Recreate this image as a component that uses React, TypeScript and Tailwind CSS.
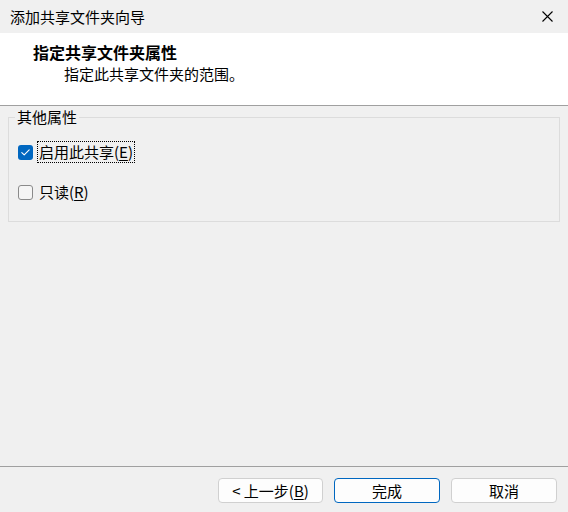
import React from "react";

const font = { fontFamily: '"Noto Sans CJK SC", "Noto Sans", sans-serif' };

function CheckBox({ checked }: { checked: boolean }) {
  if (checked) {
    return (
      <span className="flex h-[15px] w-[15px] shrink-0 items-center justify-center rounded-[3px] bg-[#0067c0]">
        <svg width="9" height="7" viewBox="0 0 9 7" fill="none">
          <path d="M0.8 3.6 L3.2 5.9 L8.2 0.9" stroke="#ffffff" strokeWidth="1.1" strokeLinecap="round" strokeLinejoin="round" />
        </svg>
      </span>
    );
  }
  return <span className="h-[15px] w-[15px] shrink-0 rounded-[3px] border border-[#8a8a8a] bg-[#f5f5f5]" />;
}

export default function App() {
  return (
    <div
      className="flex h-[512px] w-[568px] flex-col overflow-hidden bg-[#f0f0f0] text-[15px] text-black"
      style={font}
    >
      {/* Title bar */}
      <div className="flex h-[33px] shrink-0 items-center justify-between bg-[#f0f0f0] pl-[10px] pr-[15px]">
        <span className="leading-[20px]">添加共享文件夹向导</span>
        <svg width="11" height="11" viewBox="0 0 11 11" className="mt-[-1px]">
          <path d="M0.5 0.5 L10.5 10.5 M10.5 0.5 L0.5 10.5" stroke="#000" strokeWidth="1.1" />
        </svg>
      </div>

      {/* Header */}
      <div className="h-[73px] shrink-0 border-b border-[#a0a0a0] bg-white pt-[9px]">
        <div className="pl-[33px] text-[16px] font-bold leading-[20px]">指定共享文件夹属性</div>
        <div className="mt-[2px] pl-[64px] leading-[20px]">指定此共享文件夹的范围。</div>
      </div>

      {/* Content */}
      <div className="flex-1 px-[8px] pt-[1px]">
        <fieldset className="m-0 border border-[#dcdcdc] pb-[18px] pl-[6px] pr-[9px]">
          <legend className="px-[2px] leading-[20px]">其他属性</legend>
          <div className="flex flex-col gap-[18px] pl-[3px] pt-[14px]">
            <div className="flex h-[22px] items-center">
              <CheckBox checked />
              <span className="ml-[4px] border border-dotted border-black px-[1px] leading-[20px]">
                启用此共享(<span className="underline underline-offset-2">E</span>)
              </span>
            </div>
            <div className="flex h-[22px] items-center">
              <CheckBox checked={false} />
              <span className="ml-[4px] border border-transparent px-[1px] leading-[20px]">
                只读(<span className="underline underline-offset-2">R</span>)
              </span>
            </div>
          </div>
        </fieldset>
      </div>

      {/* Footer */}
      <div className="h-[46px] shrink-0 border-t border-[#a0a0a0]">
        <div className="flex justify-end gap-[11px] pr-[11px] pt-[11px]">
          <button className="flex h-[25px] w-[105px] items-center justify-center rounded-[4px] border border-[#d0d0d0] bg-[#fdfdfd] text-[15px] leading-[20px]">
            &lt;&nbsp;上一步(<span className="underline underline-offset-2">B</span>)
          </button>
          <button className="flex h-[25px] w-[106px] items-center justify-center rounded-[4px] border border-[#0067c0] bg-[#fdfdfd] text-[15px] leading-[20px]">
            完成
          </button>
          <button className="flex h-[25px] w-[106px] items-center justify-center rounded-[4px] border border-[#d0d0d0] bg-[#fdfdfd] text-[15px] leading-[20px]">
            取消
          </button>
        </div>
      </div>
    </div>
  );
}
